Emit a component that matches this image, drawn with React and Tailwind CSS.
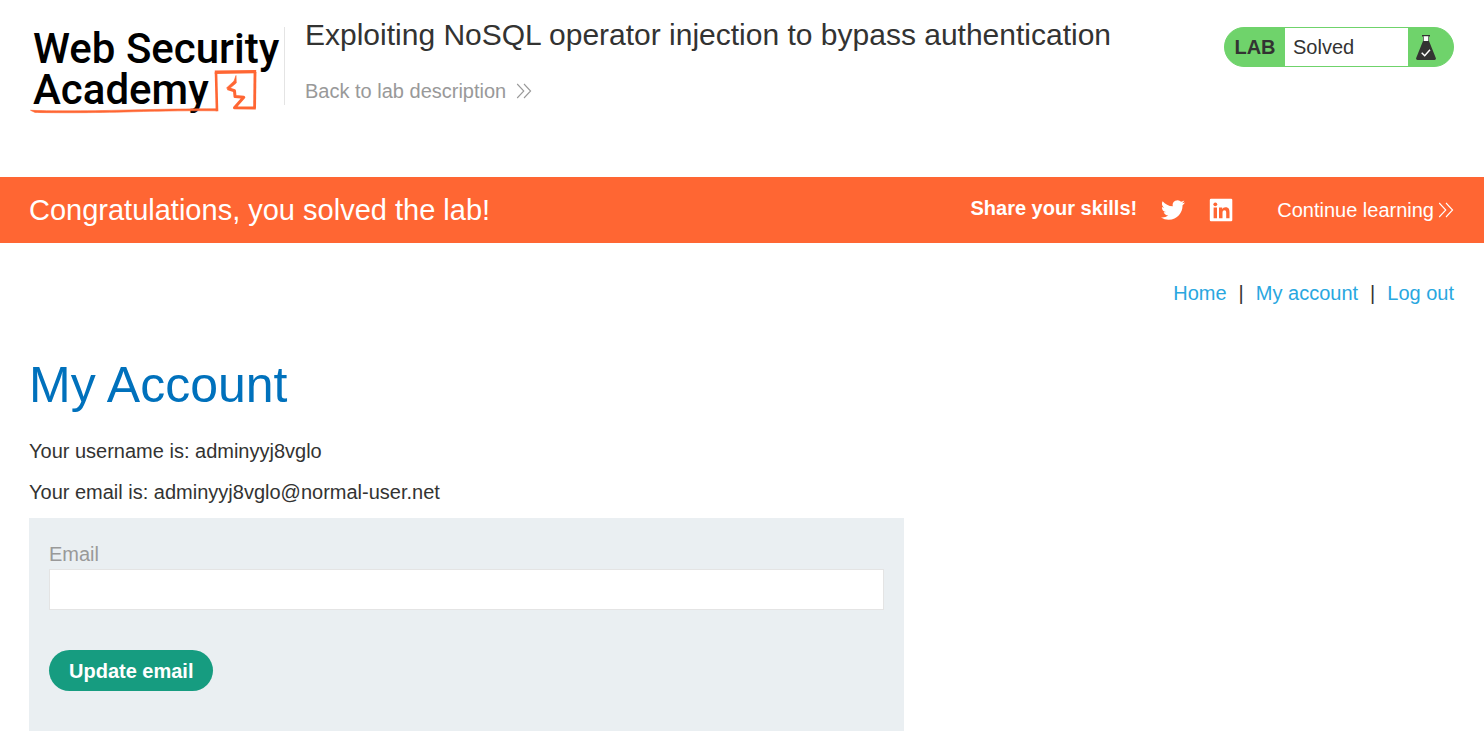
import React from "react";

function Chevrons({ className }) {
  return (
    <svg className={className} width="16" height="16" viewBox="0 0 16 16" fill="none" stroke="currentColor" strokeWidth="1.1" aria-hidden="true">
      <path d="M1.2 1 7.8 8 1.2 15M8 1l6.6 7L8 15" />
    </svg>
  );
}

function Logo() {
  return (
    <a href="#" className="relative block w-[255px] shrink-0 pt-px pl-1 font-[Roboto,'Liberation_Sans',sans-serif] text-[42px] leading-[41px] font-medium whitespace-nowrap text-black">
      <span className="block">Web Security</span>
      <span className="block">Academy</span>
      <svg width="255" height="90" viewBox="0 0 255 90" aria-hidden="true" className="absolute top-0 left-0">
        <g fill="none" stroke="#ff6633" strokeLinejoin="round">
          <path d="M1.500 83.300C20 84 50 84.200 100 83c34-.8 60-1.200 87.500-1.200l.2 2C150 83.500 120 84.300 95 85c-40 1-75 .8-89 .4z" fill="#ff6633" strokeWidth=".6" />
          <path d="M188 84.200 187 45.300" strokeWidth="2.600" />
          <path d="M185.800 45.300 227.200 44.600" strokeWidth="3.400" />
          <path d="M226 45 225.600 81.300" strokeWidth="2.800" />
          <path d="M226.800 81 205.500 80.800 214.800 70.300 206 69.500 205.500 63.800 198.500 61.500" strokeWidth="3" />
          <path d="M207 48.500 207.300 56 200 62 197.500 61 205 54z" fill="#ff6633" strokeWidth=".6" />
        </g>
      </svg>
    </a>
  );
}

function Flask() {
  return (
    <svg width="20" height="25" viewBox="0 0 20 25" aria-hidden="true">
      <path d="M6 0h8v1.500H6z" fill="#333332" />
      <path d="M7 1.500h6V7H7z" fill="#333332" />
      <path d="M7.700 1.200h4.600V6H7.700z" fill="#fff" />
      <path d="M7 6h6l6.800 17c.4 1-.2 2-1.300 2h-17C.4 25-.2 24 .2 23z" fill="#333332" />
      <path d="m5.700 17.700 3 3 5.300-5.900" fill="none" stroke="#fff" strokeWidth="1.500" />
    </svg>
  );
}

function Twitter() {
  return (
    <svg width="24" height="24" viewBox="0 0 24 24" fill="currentColor" aria-hidden="true">
      <path d="M23.950 4.570a10 10 0 0 1-2.820.77 4.960 4.960 0 0 0 2.160-2.720c-.95.55-2 .95-3.130 1.180a4.920 4.920 0 0 0-8.380 4.480C7.690 8.090 4.070 6.130 1.640 3.160a4.820 4.820 0 0 0-.67 2.480c0 1.710.87 3.210 2.190 4.100a4.900 4.900 0 0 1-2.230-.62v.06a4.920 4.920 0 0 0 3.950 4.830 5 5 0 0 1-2.210.08 4.940 4.940 0 0 0 4.600 3.420A9.870 9.870 0 0 1 0 19.540a13.990 13.990 0 0 0 7.550 2.210c9.050 0 14-7.500 14-13.990 0-.21 0-.42-.02-.63a9.940 9.940 0 0 0 2.460-2.550z" />
    </svg>
  );
}

function LinkedIn() {
  return (
    <svg width="24" height="24" viewBox="0 0 24 24" aria-hidden="true">
      <rect x=".8" y=".8" width="22.500" height="22.500" rx="1.200" fill="#fff" />
      <g fill="#ff6633">
        <circle cx="6.300" cy="6.300" r="1.900" />
        <path d="M4.600 9.600H8v10.600H4.600zM10 9.600h3.200v1.500c.5-.9 1.700-1.800 3.300-1.800 3.400 0 4 2.200 4 5.100v5.800h-3.300V15c0-1.200 0-2.800-1.700-2.800s-2 1.300-2 2.700v5.300H10z" />
      </g>
    </svg>
  );
}

export default function App() {
  return (
    <div className="bg-white pb-4 font-['Liberation_Sans',Arial,sans-serif] text-xl leading-6 text-[#333332]">
      <header className="flex items-start pt-[27px] pr-[30px] pb-[72px] pl-[29px]">
        <div className="h-[78px] shrink-0 border-r border-[#e4e4e4]">
          <Logo />
        </div>
        <div className="-mt-3 flex grow flex-col items-start gap-6 pl-5">
          <h2 className="text-3xl leading-10">Exploiting NoSQL operator injection to bypass authentication</h2>
          <a href="#" className="flex items-center gap-2.5 text-[#999]">
            Back to lab description
            <Chevrons />
          </a>
        </div>
        <div className="flex h-10 w-[230px] shrink-0 overflow-hidden rounded-full border border-[#6fd36b] bg-[#6fd36b]">
          <span className="flex w-[60px] items-center justify-center font-bold">LAB</span>
          <p className="flex grow items-center bg-white pl-2">Solved</p>
          <span className="flex w-[45px] items-center pl-2">
            <Flask />
          </span>
        </div>
      </header>

      <section className="flex h-[66px] items-center bg-[#ff6633] pr-[30px] pl-[29px] text-white">
        <h4 className="grow text-[29px]">Congratulations, you solved the lab!</h4>
        <div className="flex items-center">
          <span className="pb-1 font-bold">Share your skills!</span>
          <a href="#" aria-label="Share on Twitter" className="ml-6">
            <Twitter />
          </a>
          <a href="#" aria-label="Share on LinkedIn" className="ml-6">
            <LinkedIn />
          </a>
          <a href="#" className="ml-11 flex items-center gap-1">
            Continue learning
            <Chevrons />
          </a>
        </div>
      </section>

      <main className="pr-[30px] pl-[29px]">
        <nav className="flex justify-end gap-3 pt-[38px]">
          <a href="#" className="text-[#29a7df]">Home</a>
          <span>|</span>
          <a href="#" className="text-[#29a7df]">My account</a>
          <span>|</span>
          <a href="#" className="text-[#29a7df]">Log out</a>
        </nav>
        <h1 className="pt-12 text-[50px] leading-[64px] text-[#0071bc]">My Account</h1>
        <p className="mt-[22px]">Your username is: adminyyj8vglo</p>
        <p className="mt-[17px]">Your email is: adminyyj8vglo@normal-user.net</p>
        <form className="mt-[14px] max-w-[875px] bg-[#eaeff2] px-5 pt-6 pb-10" onSubmit={(e) => e.preventDefault()}>
          <label htmlFor="email" className="block text-[#999]">Email</label>
          <input id="email" type="email" className="mt-[3px] block h-[41px] w-full border border-[#e4e4e4] bg-white px-2 outline-none" />
          <button type="submit" className="mt-10 block h-[41px] rounded-full bg-[#169c80] px-5 font-bold text-white">Update email</button>
        </form>
      </main>
    </div>
  );
}
